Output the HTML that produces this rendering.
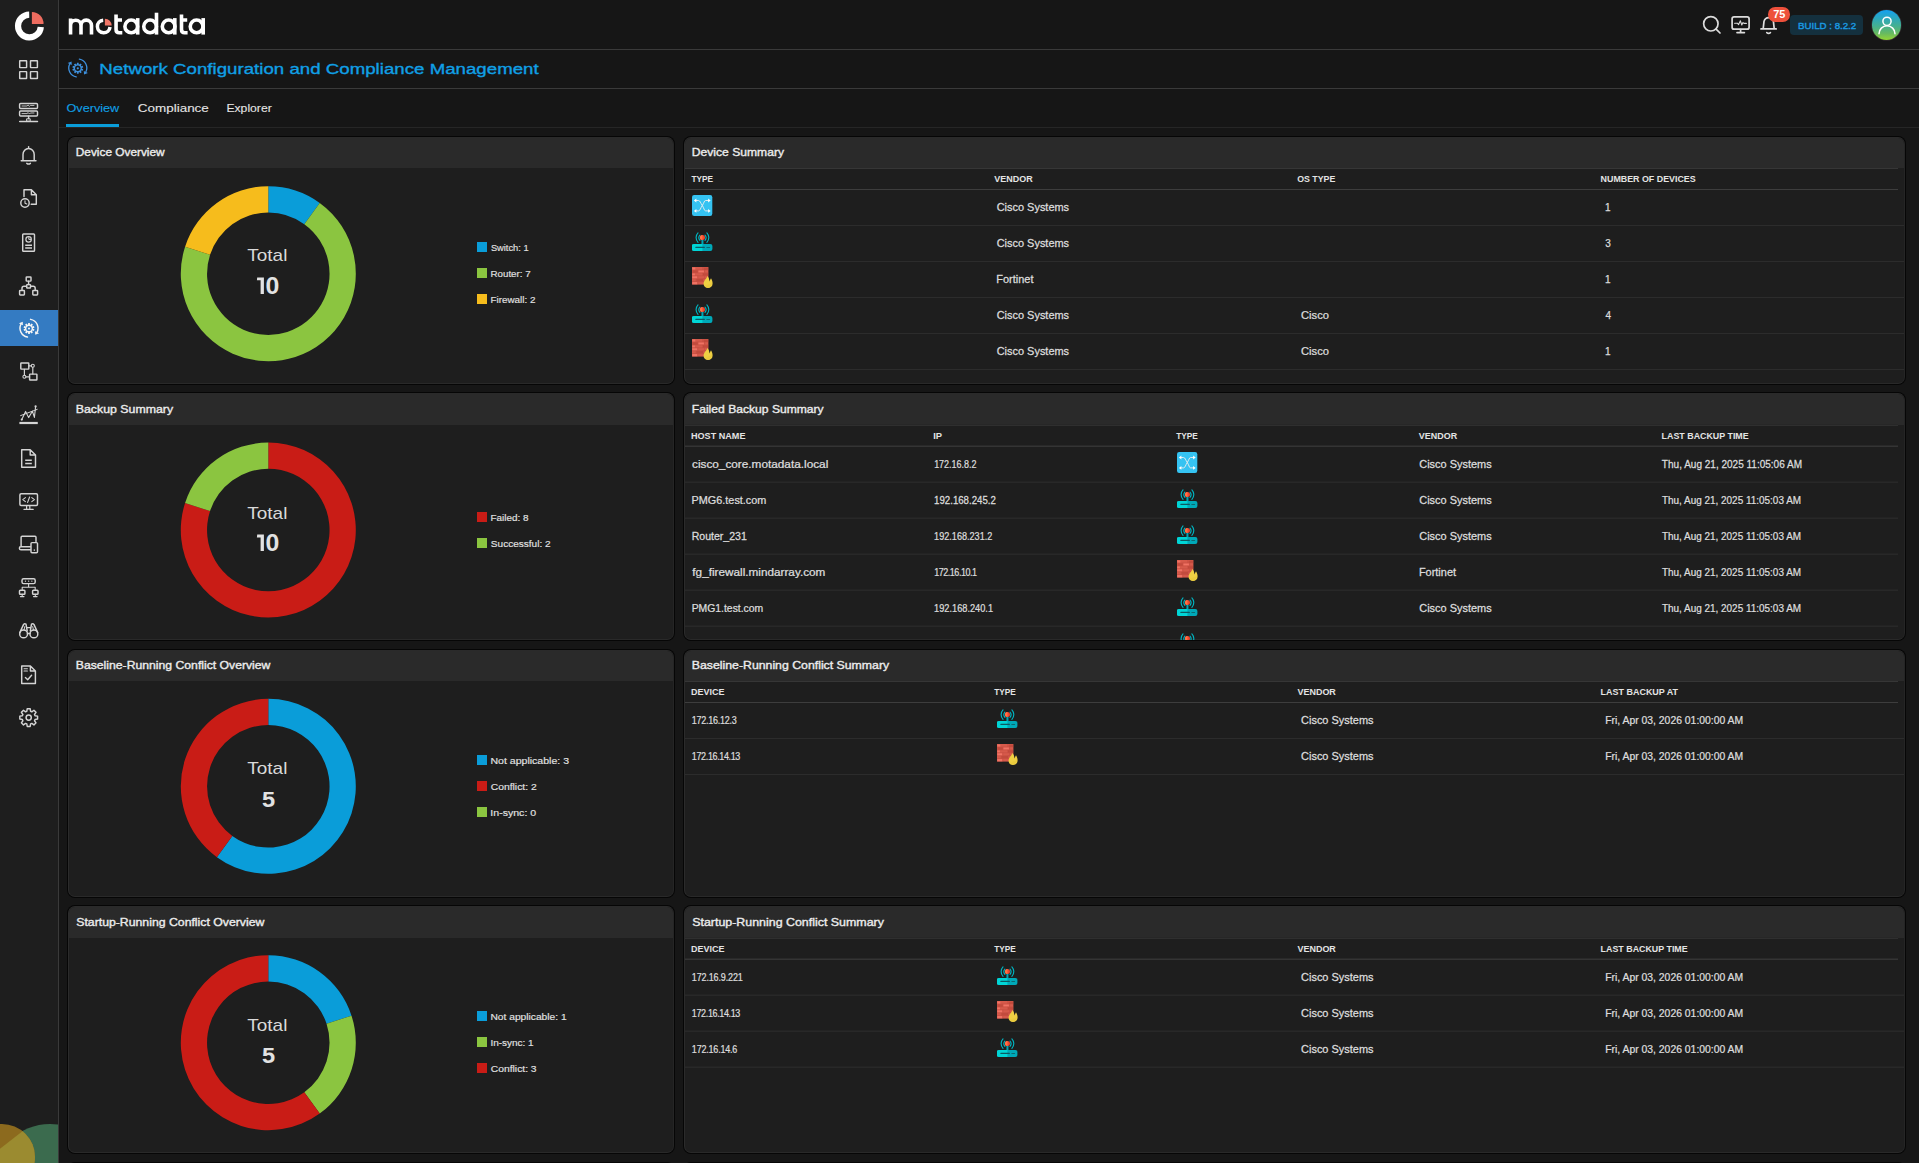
<!DOCTYPE html>
<html><head><meta charset="utf-8"><title>Network Configuration and Compliance Management</title>
<style>
html,body{margin:0;padding:0;background:#161616;}
html{overflow:hidden;width:1919px;height:1163px;}
body{width:1919px;height:1163px;overflow:hidden;position:relative;font-family:"Liberation Sans",sans-serif;}
.t{position:absolute;white-space:nowrap;line-height:1;}
.abs{position:absolute;}
.panel{position:absolute;box-sizing:border-box;background:#1e1e1e;border:1px solid;border-color:#2a2a2a #252525 #292929 #2b2b2b;border-radius:7px;box-shadow:0 0 0 1px #060606;overflow:hidden;}
.ph{position:absolute;left:0;top:0;right:0;height:30px;background:#2a2a2a;}
.hl{position:absolute;height:1px;}
svg{position:absolute;overflow:visible;}
#txt text{font-family:"Liberation Sans",sans-serif;white-space:pre;}
#root{position:relative;width:1919px;height:1163px;overflow:hidden;background:#161616;}
</style></head><body><div id="root">
<div class="abs" style="left:0;top:0;width:58px;height:1163px;background:#1e1e1e;overflow:hidden">
<svg style="left:0;top:1100px" width="58" height="63" viewBox="0 1100 58 63"><defs><clipPath id="cb"><circle cx="2" cy="1157" r="33"/></clipPath></defs><circle cx="50" cy="1181" r="57" fill="#3b6b4e"/><circle cx="2" cy="1157" r="33" fill="#8c6a1e"/><path d="M-2 1150.2L26 1128.6L60 1128V1170H-2Z" fill="#9b8b30" clip-path="url(#cb)"/></svg>
</div>
<div class="abs" style="left:58px;top:0;width:1px;height:1163px;background:#3a3a3a"></div>
<div class="abs" style="left:0;top:310px;width:58px;height:36px;background:#347bc2"></div>
<div class="abs" style="left:59px;top:49px;width:1860px;height:1px;background:#3a3a3a"></div>
<div class="abs" style="left:59px;top:88px;width:1860px;height:1px;background:#3a3a3a"></div>
<div class="abs" style="left:59px;top:127px;width:1860px;height:1px;background:#262626"></div>
<div class="abs" style="left:66px;top:124px;width:53px;height:3px;background:#0a9dd9"></div>
<svg style="left:0;top:0" width="59" height="50"><path d="M40.8 26.9A11.4 11.4 0 1 1 29.2 14.6" fill="none" stroke="#ffffff" stroke-width="6.2"/><path d="M31.9 23.9V12A11.6 11.6 0 0 1 43.5 23.9Z" fill="#ee6c5f"/></svg>
<svg style="left:0;top:0" width="260" height="50" fill="none" stroke="#ffffff" stroke-width="3.6"><path d="M70.55 34.5V18.4M70.55 25.4A5.22 5.22 0 0 1 81 25.4V34.5M81 25.4A5.25 5.25 0 0 1 91.5 25.4V34.5"/><path d="M110 27A6.3 6.3 0 1 1 103.2 20.2" stroke-width="3.5"/><path d="M104.9 25.5V18.7A6.8 6.8 0 0 1 111.7 25.5Z" fill="#f07667" stroke="none"/><path d="M116.05 14.6V29.6Q116.05 32.8 119.2 32.8H122.3M116 20H122" /><circle cx="131.25" cy="26.4" r="6.35"/><path d="M137.7 18.1V34.6"/><circle cx="150.1" cy="26.4" r="6.35"/><path d="M156.5 12.7V34.6"/><circle cx="168.65" cy="26.4" r="6.35"/><path d="M174.8 18.1V34.6"/><path d="M181.5 14.6V29.6Q181.5 32.8 184.6 32.8H187.6M181.4 20H187.2"/><circle cx="196.6" cy="26.4" r="6.35"/><path d="M203.2 18.1V34.6"/></svg>
<svg style="left:1690px;top:0" width="110" height="50" viewBox="1690 0 110 50" fill="none" stroke="#dcdcdc" stroke-width="1.7" stroke-linecap="round" stroke-linejoin="round"><circle cx="1710.85" cy="23.8" r="7.2"/><path d="M1716.1 29.1L1720 33"/><rect x="1732.1" y="16.9" width="17" height="12.3" rx="2"/><path d="M1740.6 29.6V32.2M1737 32.6H1744.4"/><path d="M1734.6 23.2H1737.4L1738.6 24.6L1740.4 20.8L1741.8 25L1743 22.6L1744 23.4H1746.4" stroke-width="1.1"/><path d="M1761 28.9H1776.2M1763.2 28.7L1764 21.4A4.9 5.4 0 0 1 1773.4 21.4L1774.2 28.7"/><path d="M1766.8 32.6Q1768.6 34.2 1770.4 32.6"/></svg>
<div class="abs" style="left:1768px;top:7px;width:22px;height:14.5px;border-radius:7.25px;background:#ee503b"></div>
<div class="abs" style="left:1790px;top:15px;width:73px;height:20px;border-radius:4px;background:#14303e"></div>
<div class="abs" style="left:1871.6px;top:9.9px;width:29.6px;height:29.8px;border-radius:50%;background:linear-gradient(180deg,#18a2ea 4%,#2ea8b8 30%,#46b08e 55%,#68ba60 78%,#8fd238 98%);box-shadow:0 0 0 0.6px #3a2f36"></div>
<svg style="left:1871.5px;top:9.8px" width="30" height="30" fill="none" stroke="#ffffff" stroke-width="1.5" stroke-linecap="round"><circle cx="15" cy="11.3" r="4.1"/><path d="M7 23.8A8 8 0 0 1 23 23.8"/></svg>
<svg style="left:0;top:0" width="59" height="760" fill="none" stroke="#d4d4d4" stroke-width="1.45" stroke-linejoin="round" stroke-linecap="round"><rect x="19.7" y="60.7" width="6.9" height="6.9" rx=".3"/><rect x="30.5" y="60.7" width="6.9" height="6.9" rx=".3"/><rect x="19.7" y="71.6" width="6.9" height="6.9" rx=".3"/><rect x="30.5" y="71.6" width="6.9" height="6.9" rx=".3"/><rect x="19.6" y="103.5" width="17.9" height="4.9" rx="1"/><rect x="19.6" y="111" width="17.9" height="5" rx="1"/><path d="M22 106H27l1.2-1 1.2 1.4 1-1H34M22 113.6H27l1.2-1 1.2 1.4 1-1H34" stroke-width=".9"/><path d="M28.6 116.2V118.6M19.7 121.4H37.5" /><rect x="27" y="118.8" width="3.2" height="2.4" stroke-width="1"/><path d="M28.6 146.6V148.2M21.2 160.8H36M23 160.6V154.4A5.6 6 0 0 1 34.2 154.4V160.6"/><path d="M26.8 163.4Q28.6 164.8 30.4 163.4" stroke-width="1.5"/><path d="M24 196.6V189.8H31.4L36.3 194.8V204.3H31.2M31.4 189.8V194.8H36.3"/><circle cx="25" cy="203" r="4.2"/><path d="M25 200.8V203.2L26.8 204" stroke-width="1.1"/><rect x="22.7" y="233.9" width="11.8" height="17.3" rx=".8"/><circle cx="28.6" cy="239.4" r="2.7" stroke-width="1.2"/><path d="M28.8 237.6V239.4H30.6" stroke-width="1"/><path d="M25.2 245.3H32M25.2 248.1H32" stroke-width="1.5" stroke-linecap="butt"/><rect x="26.2" y="276.9" width="4.8" height="4.2" rx=".6"/><rect x="26.7" y="284.6" width="3.8" height="3.4" rx=".5"/><rect x="19.6" y="290.5" width="4.8" height="4.4" rx=".6"/><rect x="32.8" y="290.5" width="4.8" height="4.4" rx=".6"/><path d="M28.6 281.3V284.4M26.5 286.3H24Q22 286.3 22 288.4V290.3M30.7 286.3H33.2Q35.2 286.3 35.2 288.4V290.3"/></svg>
<svg style="left:0;top:0" width="59" height="760"><path d="M30.56 319.34A9.0 9.0 0 0 1 36.95 332.43" fill="none" stroke="#f4f4f4" stroke-width="1.45" stroke-linecap="round"/><path d="M35.25 334.67L35.02 331.14L39.16 333.15Z" fill="#f4f4f4"/><path d="M27.44 337.06A9.0 9.0 0 0 1 21.05 323.97" fill="none" stroke="#f4f4f4" stroke-width="1.45" stroke-linecap="round"/><path d="M22.75 321.73L22.98 325.26L18.84 323.25Z" fill="#f4f4f4"/><path d="M28.04 324.62L28.14 323.07L29.86 323.07L29.96 324.62L30.50 324.79L31.50 323.60L32.89 324.61L32.06 325.93L32.39 326.38L33.90 326.00L34.43 327.64L32.99 328.22L32.99 328.78L34.43 329.36L33.90 331.00L32.39 330.62L32.06 331.07L32.89 332.39L31.50 333.40L30.50 332.21L29.96 332.38L29.86 333.93L28.14 333.93L28.04 332.38L27.50 332.21L26.50 333.40L25.11 332.39L25.94 331.07L25.61 330.62L24.10 331.00L23.57 329.36L25.01 328.78L25.01 328.22L23.57 327.64L24.10 326.00L25.61 326.38L25.94 325.93L25.11 324.61L26.50 323.60L27.50 324.79Z" fill="#f4f4f4"/><circle cx="29" cy="328.5" r="2.6" fill="#347bc2"/><circle cx="29" cy="328.5" r="1.05" fill="#f4f4f4"/></svg>
<svg style="left:0;top:0" width="59" height="760" fill="none" stroke="#d4d4d4" stroke-width="1.45" stroke-linejoin="round" stroke-linecap="round"><rect x="20.8" y="362.9" width="8" height="6.2" rx=".5"/><rect x="29.6" y="374.1" width="7.3" height="5.8" rx=".5"/><circle cx="32.8" cy="365.8" r="1.5" stroke-width="1.1"/><circle cx="24.4" cy="376.8" r="1.5" stroke-width="1.1"/><path d="M29 365.8H31.2M32.8 367.5V374M24.4 369.3V375.2M26 376.8H29.4" stroke-width="1.2"/><path d="M19.4 423H37.8" stroke-width="2.2" stroke-linecap="butt"/><path d="M21.8 419.6L25.6 411.4L28.6 417.6L32.4 411.2L34.4 417.4L35.6 406.6" stroke-width="1.1"/><path d="M20.6 415.6L37.2 409.4" stroke-width="1"/><circle cx="21.8" cy="419.6" r="1.1" fill="#d4d4d4" stroke="none"/><circle cx="35.6" cy="406.4" r="1.1" fill="#d4d4d4" stroke="none"/><path d="M21.7 449.7H30.2L35.5 455V467.3H21.7ZM30.2 449.7V455H35.5"/><path d="M25.2 460.2H31.8M25.2 463.5H31.8" stroke-width="1.5" stroke-linecap="butt"/><rect x="19.9" y="493.7" width="17.6" height="11.7" rx="1.2"/><path d="M26.6 506V508.6M29.8 506V508.6M24 509.4H33.2" stroke-width="1.2"/><path d="M25.4 497.6L22.8 499.6L25.4 501.6M31.8 497.6L34.4 499.6L31.8 501.6M29.6 497L27.6 502.4" stroke-width="1.1"/><path d="M21.1 546.4V537.2Q21.1 536.2 22.1 536.2H35Q36 536.2 36 537.2V541.6M30.4 546.8H20.6Q19.4 546.8 19.4 548.2Q19.4 549.8 21 549.8H30.4"/><rect x="31" y="542.6" width="6.5" height="10.2" rx="1"/><path d="M34.3 549.8V550.3" stroke-width="1.3"/><rect x="22" y="578.8" width="13.2" height="4.8" rx="1.6"/><path d="M25.4 581.2h.1M28.6 581.2h.1M31.8 581.2h.1" stroke-width="1.2"/><path d="M28.6 583.8V587.3M22.2 589.4V587.3H35.2V589.4" stroke-width="1.1"/><rect x="19.5" y="590.2" width="5.4" height="4" rx=".8"/><rect x="32.6" y="590.2" width="5.4" height="4" rx=".8"/><path d="M22.2 594.4V596.2M20.4 596.6H24M35.3 594.4V596.2M33.5 596.6H37.1" stroke-width="1.1"/><circle cx="23.6" cy="633.9" r="3.9"/><circle cx="33.9" cy="633.9" r="3.9"/><path d="M19.8 632.6L23.6 624.4Q24.6 623.2 26 624.2L27.2 631M37.7 632.6L33.9 624.4Q32.9 623.2 31.5 624.2L30.3 631M27.3 627.6H30.2M27.5 633.4H30" /><path d="M24 630L24.8 626.6M33.5 630L32.7 626.6" stroke-width="1"/><path d="M21.7 666H30.4L35.4 671V683.5H21.7ZM30.4 666V671H35.4"/><path d="M24 668.8H27.4M24 671H27.4" stroke-width="1.1"/><path d="M25.4 677.6L27.7 679.7L31.6 675.3" stroke-width="1.4"/></svg>
<svg style="left:0;top:0" width="59" height="760"><path d="M26.81 711.28L27.22 708.72L30.18 708.72L30.59 711.28L31.84 711.79L33.93 710.28L36.02 712.37L34.51 714.46L35.02 715.71L37.58 716.12L37.58 719.08L35.02 719.49L34.51 720.74L36.02 722.83L33.93 724.92L31.84 723.41L30.59 723.92L30.18 726.48L27.22 726.48L26.81 723.92L25.56 723.41L23.47 724.92L21.38 722.83L22.89 720.74L22.38 719.49L19.82 719.08L19.82 716.12L22.38 715.71L22.89 714.46L21.38 712.37L23.47 710.28L25.56 711.79Z" fill="none" stroke="#d4d4d4" stroke-width="1.45" stroke-linejoin="round"/><circle cx="28.7" cy="717.6" r="2.6" fill="none" stroke="#d4d4d4" stroke-width="1.5"/></svg>
<svg style="left:0;top:0" width="120" height="100"><path d="M79.36 59.14A9.0 9.0 0 0 1 85.75 72.23" fill="none" stroke="#3d8fdc" stroke-width="1.3" stroke-linecap="round"/><path d="M84.05 74.47L83.82 70.94L87.96 72.95Z" fill="#3d8fdc"/><path d="M76.24 76.86A9.0 9.0 0 0 1 69.85 63.77" fill="none" stroke="#3d8fdc" stroke-width="1.3" stroke-linecap="round"/><path d="M71.55 61.53L71.78 65.06L67.64 63.05Z" fill="#3d8fdc"/><path d="M76.84 64.42L76.94 62.87L78.66 62.87L78.76 64.42L79.30 64.59L80.30 63.40L81.69 64.41L80.86 65.73L81.19 66.18L82.70 65.80L83.23 67.44L81.79 68.02L81.79 68.58L83.23 69.16L82.70 70.80L81.19 70.42L80.86 70.87L81.69 72.19L80.30 73.20L79.30 72.01L78.76 72.18L78.66 73.73L76.94 73.73L76.84 72.18L76.30 72.01L75.30 73.20L73.91 72.19L74.74 70.87L74.41 70.42L72.90 70.80L72.37 69.16L73.81 68.58L73.81 68.02L72.37 67.44L72.90 65.80L74.41 66.18L74.74 65.73L73.91 64.41L75.30 63.40L76.30 64.59Z" fill="#3d8fdc"/><circle cx="77.8" cy="68.3" r="2.7" fill="#161616"/><circle cx="77.8" cy="68.3" r="1.1" fill="#3d8fdc"/></svg>
<div class="panel" style="left:68px;top:137px;width:606px;height:247px"><div class="ph" style="height:30px"></div></div>
<svg style="left:0;top:0" width="1919" height="1163"><path d="M268.30 186.20A87.5 87.5 0 0 1 319.73 202.91L304.30 224.15A61.25 61.25 0 0 0 268.30 212.45Z" fill="#0a9dd9"/><path d="M319.73 202.91A87.5 87.5 0 1 1 185.08 246.66L210.05 254.77A61.25 61.25 0 1 0 304.30 224.15Z" fill="#8bc540"/><path d="M185.08 246.66A87.5 87.5 0 0 1 268.30 186.20L268.30 212.45A61.25 61.25 0 0 0 210.05 254.77Z" fill="#f6bc1c"/></svg>
<div class="abs" style="left:477px;top:242.00px;width:10px;height:10px;background:#0a9dd9"></div>
<div class="abs" style="left:477px;top:268.00px;width:10px;height:10px;background:#8bc540"></div>
<div class="abs" style="left:477px;top:294.00px;width:10px;height:10px;background:#f6bc1c"></div>
<div class="panel" style="left:68px;top:393.33px;width:606px;height:247px"><div class="ph" style="height:31px"></div></div>
<svg style="left:0;top:0" width="1919" height="1163"><path d="M268.30 442.53A87.5 87.5 0 1 1 185.08 502.99L210.05 511.10A61.25 61.25 0 1 0 268.30 468.78Z" fill="#c91c16"/><path d="M185.08 502.99A87.5 87.5 0 0 1 268.30 442.53L268.30 468.78A61.25 61.25 0 0 0 210.05 511.10Z" fill="#8bc540"/></svg>
<div class="abs" style="left:477px;top:512.33px;width:10px;height:10px;background:#c91c16"></div>
<div class="abs" style="left:477px;top:538.33px;width:10px;height:10px;background:#8bc540"></div>
<div class="panel" style="left:68px;top:649.67px;width:606px;height:247px"><div class="ph" style="height:30px"></div></div>
<svg style="left:0;top:0" width="1919" height="1163"><path d="M268.30 698.87A87.5 87.5 0 1 1 216.87 857.16L232.30 835.92A61.25 61.25 0 1 0 268.30 725.12Z" fill="#0a9dd9"/><path d="M216.87 857.16A87.5 87.5 0 0 1 268.30 698.87L268.30 725.12A61.25 61.25 0 0 0 232.30 835.92Z" fill="#c91c16"/></svg>
<div class="abs" style="left:477px;top:755.17px;width:10px;height:10px;background:#0a9dd9"></div>
<div class="abs" style="left:477px;top:781.17px;width:10px;height:10px;background:#c91c16"></div>
<div class="abs" style="left:477px;top:807.17px;width:10px;height:10px;background:#8bc540"></div>
<div class="panel" style="left:68px;top:906px;width:606px;height:247px"><div class="ph" style="height:31px"></div></div>
<svg style="left:0;top:0" width="1919" height="1163"><path d="M268.30 955.20A87.5 87.5 0 0 1 351.52 1015.66L326.55 1023.77A61.25 61.25 0 0 0 268.30 981.45Z" fill="#0a9dd9"/><path d="M351.52 1015.66A87.5 87.5 0 0 1 319.73 1113.49L304.30 1092.25A61.25 61.25 0 0 0 326.55 1023.77Z" fill="#8bc540"/><path d="M319.73 1113.49A87.5 87.5 0 1 1 268.30 955.20L268.30 981.45A61.25 61.25 0 1 0 304.30 1092.25Z" fill="#c91c16"/></svg>
<div class="abs" style="left:477px;top:1010.90px;width:10px;height:10px;background:#0a9dd9"></div>
<div class="abs" style="left:477px;top:1036.90px;width:10px;height:10px;background:#8bc540"></div>
<div class="abs" style="left:477px;top:1062.90px;width:10px;height:10px;background:#c91c16"></div>
<div class="panel" style="left:68px;top:1163px;width:606px;height:247px"><div class="ph"></div></div>
<div class="panel" style="left:684px;top:1163px;width:1221px;height:247px"><div class="ph"></div></div>
<div class="panel" style="left:684px;top:137px;width:1221px;height:247px"><div class="ph" style="height:30px"></div>
<div class="hl" style="left:0;top:30px;width:1213px;background:#363636"></div>
<div class="hl" style="left:0;top:51px;width:1213px;background:#3d3d3d"></div>
<div class="hl" style="left:0;top:87px;width:1220px;background:#2c2c2c"></div>
<div class="hl" style="left:0;top:123px;width:1220px;background:#2c2c2c"></div>
<div class="hl" style="left:0;top:159px;width:1220px;background:#2c2c2c"></div>
<div class="hl" style="left:0;top:195px;width:1220px;background:#2c2c2c"></div>
<div class="hl" style="left:0;top:231px;width:1220px;background:#2c2c2c"></div>
</div>
<svg style="left:692.00px;top:195.00px;overflow:hidden" width="21" height="21.00" viewBox="0 0 21 21.00"> <rect x="0" y="0" width="20.3" height="21" rx="2.2" fill="#35c3f2"/><g fill="none" stroke="#f0eeee" stroke-width="0.9" stroke-linecap="round" stroke-linejoin="round"><path d="M3.6 5.5H6.6C8 5.5 8.6 8 10.3 10.5S12.2 15.9 13.6 15.9H16.6"/><path d="M3.6 15.9H6.6C8 15.9 8.6 13 10.3 10.5S12.2 5.5 13.6 5.5H16.6"/></g><g fill="#ffffff"><path d="M1.9 5.5L4.4 3.6V7.4Z"/><path d="M1.9 15.9L4.4 14V17.8Z"/><path d="M18.6 5.5L16.1 3.6V7.4Z"/><path d="M18.6 15.9L16.1 14V17.8Z"/></g></svg>
<svg style="left:692.00px;top:231.00px;overflow:hidden" width="21" height="21.00" viewBox="0 0 21 21.00"> <g fill="none" stroke="#00b3bf" stroke-width="1.15" stroke-linecap="round"><path d="M7.9 4.1A4 4 0 0 0 7.9 9.3"/><path d="M13 4.1A4 4 0 0 1 13 9.3"/><path d="M6 1.8A7 7 0 0 0 6 11.4"/><path d="M14.9 1.8A7 7 0 0 1 14.9 11.4"/></g><rect x="9.45" y="8.5" width="2" height="5" fill="#00a5b4"/><rect x="-0.3" y="13" width="10.8" height="7" rx="2" fill="#00d5d6"/><rect x="8" y="13" width="12.4" height="7" rx="2" fill="#00a9b8"/><rect x="5" y="13" width="5.4" height="7" fill="#00d5d6"/><rect x="3.3" y="15.8" width="9.6" height="1.3" rx=".5" fill="#0b5a62"/><rect x="14.3" y="15.9" width="3.8" height="1.1" rx=".5" fill="#0b6a72"/><circle cx="10.45" cy="6.4" r="2.5" fill="#f4452e"/><path d="M10.45 3.9A2.5 2.5 0 0 0 10.45 8.9Z" fill="#ff7446"/></svg>
<svg style="left:692.00px;top:267.00px;overflow:hidden" width="21" height="21.00" viewBox="0 0 21 21.00"> <rect x="0" y="0" width="16.4" height="17.6" fill="#d65a4b"/><g fill="#f07364"><rect x="0.3" y="0.5" width="3" height="2.3"/><rect x="6.3" y="3.4" width="5.6" height="2.2"/><rect x="0.3" y="9.2" width="5" height="2.3"/><rect x="0.3" y="15" width="5" height="2.3"/><rect x="0.3" y="6.3" width="2.6" height="2.2"/></g><g fill="#c24b3d"><rect x="0.3" y="3.4" width="5.3" height="2.2"/><rect x="11" y="6.3" width="5" height="2.2"/><rect x="4.5" y="12.1" width="6.5" height="2.2"/><rect x="11.6" y="0.5" width="4.5" height="2.3"/></g><g stroke="#b84438" stroke-width=".45" opacity=".7"><path d="M0 2.95H16.4M0 5.85H16.4M0 8.75H16.4M0 11.65H16.4M0 14.55H16.4"/><path d="M10.7 0V2.9M5.9 2.9V5.8M12.6 2.9V5.8M10.7 5.8V8.7M5.7 8.7V11.6M12.5 8.7V11.6M4.1 11.6V14.5M11.3 11.6V14.5M5.7 14.5V17.6"/></g><path d="M15.6 8.9C16.6 10.8 17.4 12 17.5 14.6C18 13.4 18.4 12.4 19 11.3C20 13 20.6 14.6 20.6 16.4C20.6 19.2 18.6 21 16 21C13.4 21 11.6 19.4 11.6 16.8C11.6 13.6 14.4 11.8 15.6 8.9Z" fill="#efd043"/><path d="M16.6 17C17.6 17.4 19.2 17 20 15.4C20.2 18.6 18.4 20.4 16 20.4C14.4 20.4 13 19.6 12.4 18.4C13.6 18.8 15.4 18.4 16.6 17Z" fill="#e9c93c" opacity=".8"/></svg>
<svg style="left:692.00px;top:303.00px;overflow:hidden" width="21" height="21.00" viewBox="0 0 21 21.00"> <g fill="none" stroke="#00b3bf" stroke-width="1.15" stroke-linecap="round"><path d="M7.9 4.1A4 4 0 0 0 7.9 9.3"/><path d="M13 4.1A4 4 0 0 1 13 9.3"/><path d="M6 1.8A7 7 0 0 0 6 11.4"/><path d="M14.9 1.8A7 7 0 0 1 14.9 11.4"/></g><rect x="9.45" y="8.5" width="2" height="5" fill="#00a5b4"/><rect x="-0.3" y="13" width="10.8" height="7" rx="2" fill="#00d5d6"/><rect x="8" y="13" width="12.4" height="7" rx="2" fill="#00a9b8"/><rect x="5" y="13" width="5.4" height="7" fill="#00d5d6"/><rect x="3.3" y="15.8" width="9.6" height="1.3" rx=".5" fill="#0b5a62"/><rect x="14.3" y="15.9" width="3.8" height="1.1" rx=".5" fill="#0b6a72"/><circle cx="10.45" cy="6.4" r="2.5" fill="#f4452e"/><path d="M10.45 3.9A2.5 2.5 0 0 0 10.45 8.9Z" fill="#ff7446"/></svg>
<svg style="left:692.00px;top:339.00px;overflow:hidden" width="21" height="21.00" viewBox="0 0 21 21.00"> <rect x="0" y="0" width="16.4" height="17.6" fill="#d65a4b"/><g fill="#f07364"><rect x="0.3" y="0.5" width="3" height="2.3"/><rect x="6.3" y="3.4" width="5.6" height="2.2"/><rect x="0.3" y="9.2" width="5" height="2.3"/><rect x="0.3" y="15" width="5" height="2.3"/><rect x="0.3" y="6.3" width="2.6" height="2.2"/></g><g fill="#c24b3d"><rect x="0.3" y="3.4" width="5.3" height="2.2"/><rect x="11" y="6.3" width="5" height="2.2"/><rect x="4.5" y="12.1" width="6.5" height="2.2"/><rect x="11.6" y="0.5" width="4.5" height="2.3"/></g><g stroke="#b84438" stroke-width=".45" opacity=".7"><path d="M0 2.95H16.4M0 5.85H16.4M0 8.75H16.4M0 11.65H16.4M0 14.55H16.4"/><path d="M10.7 0V2.9M5.9 2.9V5.8M12.6 2.9V5.8M10.7 5.8V8.7M5.7 8.7V11.6M12.5 8.7V11.6M4.1 11.6V14.5M11.3 11.6V14.5M5.7 14.5V17.6"/></g><path d="M15.6 8.9C16.6 10.8 17.4 12 17.5 14.6C18 13.4 18.4 12.4 19 11.3C20 13 20.6 14.6 20.6 16.4C20.6 19.2 18.6 21 16 21C13.4 21 11.6 19.4 11.6 16.8C11.6 13.6 14.4 11.8 15.6 8.9Z" fill="#efd043"/><path d="M16.6 17C17.6 17.4 19.2 17 20 15.4C20.2 18.6 18.4 20.4 16 20.4C14.4 20.4 13 19.6 12.4 18.4C13.6 18.8 15.4 18.4 16.6 17Z" fill="#e9c93c" opacity=".8"/></svg>
<div class="panel" style="left:684px;top:393.33px;width:1221px;height:247px"><div class="ph" style="height:31px"></div>
<div class="hl" style="left:0;top:30px;width:1213px;background:#272727"></div>
<div class="hl" style="left:0;top:31px;width:1213px;background:#2f2f2f"></div>
<div class="hl" style="left:0;top:51px;width:1213px;background:#292929"></div>
<div class="hl" style="left:0;top:52px;width:1213px;background:#343434"></div>
<div class="hl" style="left:0;top:87px;width:1213px;background:#232323"></div>
<div class="hl" style="left:0;top:88px;width:1213px;background:#282828"></div>
<div class="hl" style="left:0;top:123px;width:1213px;background:#232323"></div>
<div class="hl" style="left:0;top:124px;width:1213px;background:#282828"></div>
<div class="hl" style="left:0;top:159px;width:1213px;background:#232323"></div>
<div class="hl" style="left:0;top:160px;width:1213px;background:#282828"></div>
<div class="hl" style="left:0;top:195px;width:1213px;background:#232323"></div>
<div class="hl" style="left:0;top:196px;width:1213px;background:#282828"></div>
<div class="hl" style="left:0;top:231px;width:1213px;background:#232323"></div>
<div class="hl" style="left:0;top:232px;width:1213px;background:#282828"></div>
<div class="hl" style="left:0;top:267px;width:1213px;background:#232323"></div>
<div class="hl" style="left:0;top:268px;width:1213px;background:#282828"></div>
</div>
<svg style="left:1176.70px;top:452.08px;overflow:hidden" width="21" height="21.00" viewBox="0 0 21 21.00"> <rect x="0" y="0" width="20.3" height="21" rx="2.2" fill="#35c3f2"/><g fill="none" stroke="#f0eeee" stroke-width="0.9" stroke-linecap="round" stroke-linejoin="round"><path d="M3.6 5.5H6.6C8 5.5 8.6 8 10.3 10.5S12.2 15.9 13.6 15.9H16.6"/><path d="M3.6 15.9H6.6C8 15.9 8.6 13 10.3 10.5S12.2 5.5 13.6 5.5H16.6"/></g><g fill="#ffffff"><path d="M1.9 5.5L4.4 3.6V7.4Z"/><path d="M1.9 15.9L4.4 14V17.8Z"/><path d="M18.6 5.5L16.1 3.6V7.4Z"/><path d="M18.6 15.9L16.1 14V17.8Z"/></g></svg>
<svg style="left:1176.70px;top:488.08px;overflow:hidden" width="21" height="21.00" viewBox="0 0 21 21.00"> <g fill="none" stroke="#00b3bf" stroke-width="1.15" stroke-linecap="round"><path d="M7.9 4.1A4 4 0 0 0 7.9 9.3"/><path d="M13 4.1A4 4 0 0 1 13 9.3"/><path d="M6 1.8A7 7 0 0 0 6 11.4"/><path d="M14.9 1.8A7 7 0 0 1 14.9 11.4"/></g><rect x="9.45" y="8.5" width="2" height="5" fill="#00a5b4"/><rect x="-0.3" y="13" width="10.8" height="7" rx="2" fill="#00d5d6"/><rect x="8" y="13" width="12.4" height="7" rx="2" fill="#00a9b8"/><rect x="5" y="13" width="5.4" height="7" fill="#00d5d6"/><rect x="3.3" y="15.8" width="9.6" height="1.3" rx=".5" fill="#0b5a62"/><rect x="14.3" y="15.9" width="3.8" height="1.1" rx=".5" fill="#0b6a72"/><circle cx="10.45" cy="6.4" r="2.5" fill="#f4452e"/><path d="M10.45 3.9A2.5 2.5 0 0 0 10.45 8.9Z" fill="#ff7446"/></svg>
<svg style="left:1176.70px;top:524.08px;overflow:hidden" width="21" height="21.00" viewBox="0 0 21 21.00"> <g fill="none" stroke="#00b3bf" stroke-width="1.15" stroke-linecap="round"><path d="M7.9 4.1A4 4 0 0 0 7.9 9.3"/><path d="M13 4.1A4 4 0 0 1 13 9.3"/><path d="M6 1.8A7 7 0 0 0 6 11.4"/><path d="M14.9 1.8A7 7 0 0 1 14.9 11.4"/></g><rect x="9.45" y="8.5" width="2" height="5" fill="#00a5b4"/><rect x="-0.3" y="13" width="10.8" height="7" rx="2" fill="#00d5d6"/><rect x="8" y="13" width="12.4" height="7" rx="2" fill="#00a9b8"/><rect x="5" y="13" width="5.4" height="7" fill="#00d5d6"/><rect x="3.3" y="15.8" width="9.6" height="1.3" rx=".5" fill="#0b5a62"/><rect x="14.3" y="15.9" width="3.8" height="1.1" rx=".5" fill="#0b6a72"/><circle cx="10.45" cy="6.4" r="2.5" fill="#f4452e"/><path d="M10.45 3.9A2.5 2.5 0 0 0 10.45 8.9Z" fill="#ff7446"/></svg>
<svg style="left:1176.70px;top:560.08px;overflow:hidden" width="21" height="21.00" viewBox="0 0 21 21.00"> <rect x="0" y="0" width="16.4" height="17.6" fill="#d65a4b"/><g fill="#f07364"><rect x="0.3" y="0.5" width="3" height="2.3"/><rect x="6.3" y="3.4" width="5.6" height="2.2"/><rect x="0.3" y="9.2" width="5" height="2.3"/><rect x="0.3" y="15" width="5" height="2.3"/><rect x="0.3" y="6.3" width="2.6" height="2.2"/></g><g fill="#c24b3d"><rect x="0.3" y="3.4" width="5.3" height="2.2"/><rect x="11" y="6.3" width="5" height="2.2"/><rect x="4.5" y="12.1" width="6.5" height="2.2"/><rect x="11.6" y="0.5" width="4.5" height="2.3"/></g><g stroke="#b84438" stroke-width=".45" opacity=".7"><path d="M0 2.95H16.4M0 5.85H16.4M0 8.75H16.4M0 11.65H16.4M0 14.55H16.4"/><path d="M10.7 0V2.9M5.9 2.9V5.8M12.6 2.9V5.8M10.7 5.8V8.7M5.7 8.7V11.6M12.5 8.7V11.6M4.1 11.6V14.5M11.3 11.6V14.5M5.7 14.5V17.6"/></g><path d="M15.6 8.9C16.6 10.8 17.4 12 17.5 14.6C18 13.4 18.4 12.4 19 11.3C20 13 20.6 14.6 20.6 16.4C20.6 19.2 18.6 21 16 21C13.4 21 11.6 19.4 11.6 16.8C11.6 13.6 14.4 11.8 15.6 8.9Z" fill="#efd043"/><path d="M16.6 17C17.6 17.4 19.2 17 20 15.4C20.2 18.6 18.4 20.4 16 20.4C14.4 20.4 13 19.6 12.4 18.4C13.6 18.8 15.4 18.4 16.6 17Z" fill="#e9c93c" opacity=".8"/></svg>
<svg style="left:1176.70px;top:596.08px;overflow:hidden" width="21" height="21.00" viewBox="0 0 21 21.00"> <g fill="none" stroke="#00b3bf" stroke-width="1.15" stroke-linecap="round"><path d="M7.9 4.1A4 4 0 0 0 7.9 9.3"/><path d="M13 4.1A4 4 0 0 1 13 9.3"/><path d="M6 1.8A7 7 0 0 0 6 11.4"/><path d="M14.9 1.8A7 7 0 0 1 14.9 11.4"/></g><rect x="9.45" y="8.5" width="2" height="5" fill="#00a5b4"/><rect x="-0.3" y="13" width="10.8" height="7" rx="2" fill="#00d5d6"/><rect x="8" y="13" width="12.4" height="7" rx="2" fill="#00a9b8"/><rect x="5" y="13" width="5.4" height="7" fill="#00d5d6"/><rect x="3.3" y="15.8" width="9.6" height="1.3" rx=".5" fill="#0b5a62"/><rect x="14.3" y="15.9" width="3.8" height="1.1" rx=".5" fill="#0b6a72"/><circle cx="10.45" cy="6.4" r="2.5" fill="#f4452e"/><path d="M10.45 3.9A2.5 2.5 0 0 0 10.45 8.9Z" fill="#ff7446"/></svg>
<svg style="left:1176.70px;top:632.08px;overflow:hidden" width="21" height="8.00" viewBox="0 0 21 8.00"> <g fill="none" stroke="#00b3bf" stroke-width="1.15" stroke-linecap="round"><path d="M7.9 4.1A4 4 0 0 0 7.9 9.3"/><path d="M13 4.1A4 4 0 0 1 13 9.3"/><path d="M6 1.8A7 7 0 0 0 6 11.4"/><path d="M14.9 1.8A7 7 0 0 1 14.9 11.4"/></g><rect x="9.45" y="8.5" width="2" height="5" fill="#00a5b4"/><rect x="-0.3" y="13" width="10.8" height="7" rx="2" fill="#00d5d6"/><rect x="8" y="13" width="12.4" height="7" rx="2" fill="#00a9b8"/><rect x="5" y="13" width="5.4" height="7" fill="#00d5d6"/><rect x="3.3" y="15.8" width="9.6" height="1.3" rx=".5" fill="#0b5a62"/><rect x="14.3" y="15.9" width="3.8" height="1.1" rx=".5" fill="#0b6a72"/><circle cx="10.45" cy="6.4" r="2.5" fill="#f4452e"/><path d="M10.45 3.9A2.5 2.5 0 0 0 10.45 8.9Z" fill="#ff7446"/></svg>
<div class="panel" style="left:684px;top:649.67px;width:1221px;height:247px"><div class="ph" style="height:30px"></div>
<div class="hl" style="left:0;top:30px;width:1213px;background:#363636"></div>
<div class="hl" style="left:0;top:51px;width:1213px;background:#3d3d3d"></div>
<div class="hl" style="left:0;top:87px;width:1220px;background:#2c2c2c"></div>
<div class="hl" style="left:0;top:123px;width:1220px;background:#2c2c2c"></div>
</div>
<svg style="left:996.80px;top:707.67px;overflow:hidden" width="21" height="21.00" viewBox="0 0 21 21.00"> <g fill="none" stroke="#00b3bf" stroke-width="1.15" stroke-linecap="round"><path d="M7.9 4.1A4 4 0 0 0 7.9 9.3"/><path d="M13 4.1A4 4 0 0 1 13 9.3"/><path d="M6 1.8A7 7 0 0 0 6 11.4"/><path d="M14.9 1.8A7 7 0 0 1 14.9 11.4"/></g><rect x="9.45" y="8.5" width="2" height="5" fill="#00a5b4"/><rect x="-0.3" y="13" width="10.8" height="7" rx="2" fill="#00d5d6"/><rect x="8" y="13" width="12.4" height="7" rx="2" fill="#00a9b8"/><rect x="5" y="13" width="5.4" height="7" fill="#00d5d6"/><rect x="3.3" y="15.8" width="9.6" height="1.3" rx=".5" fill="#0b5a62"/><rect x="14.3" y="15.9" width="3.8" height="1.1" rx=".5" fill="#0b6a72"/><circle cx="10.45" cy="6.4" r="2.5" fill="#f4452e"/><path d="M10.45 3.9A2.5 2.5 0 0 0 10.45 8.9Z" fill="#ff7446"/></svg>
<svg style="left:996.80px;top:743.67px;overflow:hidden" width="21" height="21.00" viewBox="0 0 21 21.00"> <rect x="0" y="0" width="16.4" height="17.6" fill="#d65a4b"/><g fill="#f07364"><rect x="0.3" y="0.5" width="3" height="2.3"/><rect x="6.3" y="3.4" width="5.6" height="2.2"/><rect x="0.3" y="9.2" width="5" height="2.3"/><rect x="0.3" y="15" width="5" height="2.3"/><rect x="0.3" y="6.3" width="2.6" height="2.2"/></g><g fill="#c24b3d"><rect x="0.3" y="3.4" width="5.3" height="2.2"/><rect x="11" y="6.3" width="5" height="2.2"/><rect x="4.5" y="12.1" width="6.5" height="2.2"/><rect x="11.6" y="0.5" width="4.5" height="2.3"/></g><g stroke="#b84438" stroke-width=".45" opacity=".7"><path d="M0 2.95H16.4M0 5.85H16.4M0 8.75H16.4M0 11.65H16.4M0 14.55H16.4"/><path d="M10.7 0V2.9M5.9 2.9V5.8M12.6 2.9V5.8M10.7 5.8V8.7M5.7 8.7V11.6M12.5 8.7V11.6M4.1 11.6V14.5M11.3 11.6V14.5M5.7 14.5V17.6"/></g><path d="M15.6 8.9C16.6 10.8 17.4 12 17.5 14.6C18 13.4 18.4 12.4 19 11.3C20 13 20.6 14.6 20.6 16.4C20.6 19.2 18.6 21 16 21C13.4 21 11.6 19.4 11.6 16.8C11.6 13.6 14.4 11.8 15.6 8.9Z" fill="#efd043"/><path d="M16.6 17C17.6 17.4 19.2 17 20 15.4C20.2 18.6 18.4 20.4 16 20.4C14.4 20.4 13 19.6 12.4 18.4C13.6 18.8 15.4 18.4 16.6 17Z" fill="#e9c93c" opacity=".8"/></svg>
<div class="panel" style="left:684px;top:906px;width:1221px;height:247px"><div class="ph" style="height:31px"></div>
<div class="hl" style="left:0;top:30px;width:1213px;background:#272727"></div>
<div class="hl" style="left:0;top:31px;width:1213px;background:#2f2f2f"></div>
<div class="hl" style="left:0;top:51px;width:1213px;background:#292929"></div>
<div class="hl" style="left:0;top:52px;width:1213px;background:#343434"></div>
<div class="hl" style="left:0;top:87px;width:1220px;background:#232323"></div>
<div class="hl" style="left:0;top:88px;width:1220px;background:#282828"></div>
<div class="hl" style="left:0;top:123px;width:1220px;background:#232323"></div>
<div class="hl" style="left:0;top:124px;width:1220px;background:#282828"></div>
<div class="hl" style="left:0;top:159px;width:1220px;background:#232323"></div>
<div class="hl" style="left:0;top:160px;width:1220px;background:#282828"></div>
</div>
<svg style="left:996.80px;top:964.75px;overflow:hidden" width="21" height="21.00" viewBox="0 0 21 21.00"> <g fill="none" stroke="#00b3bf" stroke-width="1.15" stroke-linecap="round"><path d="M7.9 4.1A4 4 0 0 0 7.9 9.3"/><path d="M13 4.1A4 4 0 0 1 13 9.3"/><path d="M6 1.8A7 7 0 0 0 6 11.4"/><path d="M14.9 1.8A7 7 0 0 1 14.9 11.4"/></g><rect x="9.45" y="8.5" width="2" height="5" fill="#00a5b4"/><rect x="-0.3" y="13" width="10.8" height="7" rx="2" fill="#00d5d6"/><rect x="8" y="13" width="12.4" height="7" rx="2" fill="#00a9b8"/><rect x="5" y="13" width="5.4" height="7" fill="#00d5d6"/><rect x="3.3" y="15.8" width="9.6" height="1.3" rx=".5" fill="#0b5a62"/><rect x="14.3" y="15.9" width="3.8" height="1.1" rx=".5" fill="#0b6a72"/><circle cx="10.45" cy="6.4" r="2.5" fill="#f4452e"/><path d="M10.45 3.9A2.5 2.5 0 0 0 10.45 8.9Z" fill="#ff7446"/></svg>
<svg style="left:996.80px;top:1000.75px;overflow:hidden" width="21" height="21.00" viewBox="0 0 21 21.00"> <rect x="0" y="0" width="16.4" height="17.6" fill="#d65a4b"/><g fill="#f07364"><rect x="0.3" y="0.5" width="3" height="2.3"/><rect x="6.3" y="3.4" width="5.6" height="2.2"/><rect x="0.3" y="9.2" width="5" height="2.3"/><rect x="0.3" y="15" width="5" height="2.3"/><rect x="0.3" y="6.3" width="2.6" height="2.2"/></g><g fill="#c24b3d"><rect x="0.3" y="3.4" width="5.3" height="2.2"/><rect x="11" y="6.3" width="5" height="2.2"/><rect x="4.5" y="12.1" width="6.5" height="2.2"/><rect x="11.6" y="0.5" width="4.5" height="2.3"/></g><g stroke="#b84438" stroke-width=".45" opacity=".7"><path d="M0 2.95H16.4M0 5.85H16.4M0 8.75H16.4M0 11.65H16.4M0 14.55H16.4"/><path d="M10.7 0V2.9M5.9 2.9V5.8M12.6 2.9V5.8M10.7 5.8V8.7M5.7 8.7V11.6M12.5 8.7V11.6M4.1 11.6V14.5M11.3 11.6V14.5M5.7 14.5V17.6"/></g><path d="M15.6 8.9C16.6 10.8 17.4 12 17.5 14.6C18 13.4 18.4 12.4 19 11.3C20 13 20.6 14.6 20.6 16.4C20.6 19.2 18.6 21 16 21C13.4 21 11.6 19.4 11.6 16.8C11.6 13.6 14.4 11.8 15.6 8.9Z" fill="#efd043"/><path d="M16.6 17C17.6 17.4 19.2 17 20 15.4C20.2 18.6 18.4 20.4 16 20.4C14.4 20.4 13 19.6 12.4 18.4C13.6 18.8 15.4 18.4 16.6 17Z" fill="#e9c93c" opacity=".8"/></svg>
<svg style="left:996.80px;top:1036.75px;overflow:hidden" width="21" height="21.00" viewBox="0 0 21 21.00"> <g fill="none" stroke="#00b3bf" stroke-width="1.15" stroke-linecap="round"><path d="M7.9 4.1A4 4 0 0 0 7.9 9.3"/><path d="M13 4.1A4 4 0 0 1 13 9.3"/><path d="M6 1.8A7 7 0 0 0 6 11.4"/><path d="M14.9 1.8A7 7 0 0 1 14.9 11.4"/></g><rect x="9.45" y="8.5" width="2" height="5" fill="#00a5b4"/><rect x="-0.3" y="13" width="10.8" height="7" rx="2" fill="#00d5d6"/><rect x="8" y="13" width="12.4" height="7" rx="2" fill="#00a9b8"/><rect x="5" y="13" width="5.4" height="7" fill="#00d5d6"/><rect x="3.3" y="15.8" width="9.6" height="1.3" rx=".5" fill="#0b5a62"/><rect x="14.3" y="15.9" width="3.8" height="1.1" rx=".5" fill="#0b6a72"/><circle cx="10.45" cy="6.4" r="2.5" fill="#f4452e"/><path d="M10.45 3.9A2.5 2.5 0 0 0 10.45 8.9Z" fill="#ff7446"/></svg>
<svg id="txt" style="left:0;top:0" width="1919" height="1163"><text transform="translate(1773.24 18.20) scale(1.0515 1)" font-size="10.4" fill="#ffffff" font-weight="700">75</text><text transform="translate(1798.10 29.10) scale(1.0199 1)" font-size="9.5" fill="#1a9ae2" stroke="#1a9ae2" stroke-width="0.4">BUILD : 8.2.2</text><text transform="translate(99.36 74.00) scale(1.2200 1)" font-size="15.3" fill="#10a0e6" letter-spacing="0.016" stroke="#10a0e6" stroke-width="0.35">Network Configuration and Compliance Management</text><text transform="translate(66.50 112.00) scale(1.0916 1)" font-size="11.6" fill="#10a0e6" stroke="#10a0e6" stroke-width="0.1">Overview</text><text transform="translate(137.83 112.00) scale(1.1600 1)" font-size="11.6" fill="#e4e4e4" stroke="#e4e4e4" stroke-width="0.1">Compliance</text><text transform="translate(226.39 112.00) scale(1.0511 1)" font-size="11.6" fill="#e4e4e4" stroke="#e4e4e4" stroke-width="0.1">Explorer</text><text transform="translate(75.82 156.30) scale(1.0965 1)" font-size="10.8" fill="#ececec" stroke="#ececec" stroke-width="0.35">Device Overview</text><text transform="translate(247.37 261.40) scale(1.1910 1)" font-size="15.9" fill="#dadada">Total</text><path d="M257.2 277.40H263.9V293.90H260.6V280.30H256.9Z" fill="#e2e2e2"/><text transform="translate(265.51 294.10) scale(1.0265 1)" font-size="24.2" fill="#e2e2e2" font-weight="700">0</text><text transform="translate(490.88 251.10) scale(0.9802 1)" font-size="9.5" fill="#e2e2e2" stroke="#e2e2e2" stroke-width="0.15">Switch: 1</text><text transform="translate(490.49 277.10) scale(1.0282 1)" font-size="9.5" fill="#e2e2e2" stroke="#e2e2e2" stroke-width="0.15">Router: 7</text><text transform="translate(490.49 303.10) scale(1.0395 1)" font-size="9.5" fill="#e2e2e2" stroke="#e2e2e2" stroke-width="0.15">Firewall: 2</text><text transform="translate(75.78 412.85) scale(1.1433 1)" font-size="10.8" fill="#ececec" stroke="#ececec" stroke-width="0.35">Backup Summary</text><text transform="translate(247.37 518.53) scale(1.1910 1)" font-size="15.9" fill="#dadada">Total</text><path d="M257.2 534.53H263.9V551.03H260.6V537.43H256.9Z" fill="#e2e2e2"/><text transform="translate(265.51 551.23) scale(1.0265 1)" font-size="24.2" fill="#e2e2e2" font-weight="700">0</text><text transform="translate(490.48 521.43) scale(1.0470 1)" font-size="9.5" fill="#e2e2e2" stroke="#e2e2e2" stroke-width="0.15">Failed: 8</text><text transform="translate(490.85 547.43) scale(1.0589 1)" font-size="9.5" fill="#e2e2e2" stroke="#e2e2e2" stroke-width="0.15">Successful: 2</text><text transform="translate(75.79 669.10) scale(1.1311 1)" font-size="10.8" fill="#ececec" stroke="#ececec" stroke-width="0.35">Baseline-Running Conflict Overview</text><text transform="translate(247.37 774.17) scale(1.1910 1)" font-size="15.9" fill="#dadada">Total</text><text transform="translate(261.89 806.67) scale(1.0442 1)" font-size="22.6" fill="#e2e2e2" font-weight="700">5</text><text transform="translate(490.43 764.27) scale(1.1126 1)" font-size="9.5" fill="#e2e2e2" stroke="#e2e2e2" stroke-width="0.15">Not applicable: 3</text><text transform="translate(490.78 790.27) scale(1.0871 1)" font-size="9.5" fill="#e2e2e2" stroke="#e2e2e2" stroke-width="0.15">Conflict: 2</text><text transform="translate(490.32 816.27) scale(1.1140 1)" font-size="9.5" fill="#e2e2e2" stroke="#e2e2e2" stroke-width="0.15">In-sync: 0</text><text transform="translate(76.25 926.10) scale(1.1373 1)" font-size="10.8" fill="#ececec" stroke="#ececec" stroke-width="0.35">Startup-Running Conflict Overview</text><text transform="translate(247.37 1030.90) scale(1.1910 1)" font-size="15.9" fill="#dadada">Total</text><text transform="translate(261.89 1063.40) scale(1.0442 1)" font-size="22.6" fill="#e2e2e2" font-weight="700">5</text><text transform="translate(490.46 1020.00) scale(1.0774 1)" font-size="9.5" fill="#e2e2e2" stroke="#e2e2e2" stroke-width="0.15">Not applicable: 1</text><text transform="translate(490.38 1046.00) scale(1.0514 1)" font-size="9.5" fill="#e2e2e2" stroke="#e2e2e2" stroke-width="0.15">In-sync: 1</text><text transform="translate(490.78 1072.00) scale(1.0859 1)" font-size="9.5" fill="#e2e2e2" stroke="#e2e2e2" stroke-width="0.15">Conflict: 3</text><text transform="translate(691.80 156.30) scale(1.1218 1)" font-size="10.8" fill="#ececec" stroke="#ececec" stroke-width="0.35">Device Summary</text><text transform="translate(691.52 182.20) scale(0.9296 1)" font-size="8.9" fill="#e4e4e4" font-weight="700">TYPE</text><text transform="translate(994.33 182.20) scale(1.0073 1)" font-size="8.9" fill="#e4e4e4" font-weight="700">VENDOR</text><text transform="translate(1297.15 182.20) scale(0.9902 1)" font-size="8.9" fill="#e4e4e4" font-weight="700">OS TYPE</text><text transform="translate(1600.60 182.20) scale(0.9979 1)" font-size="8.9" fill="#e4e4e4" font-weight="700">NUMBER OF DEVICES</text><text transform="translate(996.65 211.20) scale(1.0969 1)" font-size="10" fill="#dcdcdc" stroke="#dcdcdc" stroke-width="0.25">Cisco Systems</text><text transform="translate(1604.95 211.20) scale(1.0000 1)" font-size="10" fill="#dcdcdc" stroke="#dcdcdc" stroke-width="0.25">1</text><text transform="translate(996.65 247.20) scale(1.0969 1)" font-size="10" fill="#dcdcdc" stroke="#dcdcdc" stroke-width="0.25">Cisco Systems</text><text transform="translate(1605.33 247.20) scale(1.0000 1)" font-size="10" fill="#dcdcdc" stroke="#dcdcdc" stroke-width="0.25">3</text><text transform="translate(996.30 283.20) scale(1.0970 1)" font-size="10" fill="#dcdcdc" stroke="#dcdcdc" stroke-width="0.25">Fortinet</text><text transform="translate(1604.95 283.20) scale(1.0000 1)" font-size="10" fill="#dcdcdc" stroke="#dcdcdc" stroke-width="0.25">1</text><text transform="translate(996.65 319.20) scale(1.0969 1)" font-size="10" fill="#dcdcdc" stroke="#dcdcdc" stroke-width="0.25">Cisco Systems</text><text transform="translate(1301.04 319.20) scale(1.1162 1)" font-size="10" fill="#dcdcdc" stroke="#dcdcdc" stroke-width="0.25">Cisco</text><text transform="translate(1605.48 319.20) scale(1.0000 1)" font-size="10" fill="#dcdcdc" stroke="#dcdcdc" stroke-width="0.25">4</text><text transform="translate(996.65 355.20) scale(1.0969 1)" font-size="10" fill="#dcdcdc" stroke="#dcdcdc" stroke-width="0.25">Cisco Systems</text><text transform="translate(1301.04 355.20) scale(1.1162 1)" font-size="10" fill="#dcdcdc" stroke="#dcdcdc" stroke-width="0.25">Cisco</text><text transform="translate(1604.95 355.20) scale(1.0000 1)" font-size="10" fill="#dcdcdc" stroke="#dcdcdc" stroke-width="0.25">1</text><text transform="translate(691.80 412.85) scale(1.1215 1)" font-size="10.8" fill="#ececec" stroke="#ececec" stroke-width="0.35">Failed Backup Summary</text><text transform="translate(690.99 438.75) scale(1.0202 1)" font-size="8.9" fill="#e4e4e4" font-weight="700">HOST NAME</text><text transform="translate(933.27 438.75) scale(1.0536 1)" font-size="8.9" fill="#e4e4e4" font-weight="700">IP</text><text transform="translate(1176.22 438.75) scale(0.9296 1)" font-size="8.9" fill="#e4e4e4" font-weight="700">TYPE</text><text transform="translate(1418.83 438.75) scale(1.0073 1)" font-size="8.9" fill="#e4e4e4" font-weight="700">VENDOR</text><text transform="translate(1661.60 438.75) scale(0.9989 1)" font-size="8.9" fill="#e4e4e4" font-weight="700">LAST BACKUP TIME</text><text transform="translate(692.00 467.75) scale(1.1805 1)" font-size="10" fill="#dcdcdc" stroke="#dcdcdc" stroke-width="0.25">cisco_core.motadata.local</text><text transform="translate(934.13 467.75) scale(0.9000 1)" font-size="10" fill="#dcdcdc" letter-spacing="-0.027" stroke="#dcdcdc" stroke-width="0.25">172.16.8.2</text><text transform="translate(1419.25 467.75) scale(1.0969 1)" font-size="10" fill="#dcdcdc" stroke="#dcdcdc" stroke-width="0.25">Cisco Systems</text><text transform="translate(1661.87 467.75) scale(1.0029 1)" font-size="10" fill="#dcdcdc" stroke="#dcdcdc" stroke-width="0.25">Thu, Aug 21, 2025 11:05:06 AM</text><text transform="translate(691.60 503.75) scale(1.0857 1)" font-size="10" fill="#dcdcdc" stroke="#dcdcdc" stroke-width="0.25">PMG6.test.com</text><text transform="translate(934.08 503.75) scale(0.9661 1)" font-size="10" fill="#dcdcdc" stroke="#dcdcdc" stroke-width="0.25">192.168.245.2</text><text transform="translate(1419.25 503.75) scale(1.0969 1)" font-size="10" fill="#dcdcdc" stroke="#dcdcdc" stroke-width="0.25">Cisco Systems</text><text transform="translate(1661.88 503.75) scale(0.9957 1)" font-size="10" fill="#dcdcdc" stroke="#dcdcdc" stroke-width="0.25">Thu, Aug 21, 2025 11:05:03 AM</text><text transform="translate(691.63 539.75) scale(1.0579 1)" font-size="10" fill="#dcdcdc" stroke="#dcdcdc" stroke-width="0.25">Router_231</text><text transform="translate(934.12 539.75) scale(0.9119 1)" font-size="10" fill="#dcdcdc" stroke="#dcdcdc" stroke-width="0.25">192.168.231.2</text><text transform="translate(1419.25 539.75) scale(1.0969 1)" font-size="10" fill="#dcdcdc" stroke="#dcdcdc" stroke-width="0.25">Cisco Systems</text><text transform="translate(1661.88 539.75) scale(0.9957 1)" font-size="10" fill="#dcdcdc" stroke="#dcdcdc" stroke-width="0.25">Thu, Aug 21, 2025 11:05:03 AM</text><text transform="translate(692.35 575.75) scale(1.1762 1)" font-size="10" fill="#dcdcdc" stroke="#dcdcdc" stroke-width="0.25">fg_firewall.mindarray.com</text><text transform="translate(934.13 575.75) scale(0.9000 1)" font-size="10" fill="#dcdcdc" letter-spacing="-0.504" stroke="#dcdcdc" stroke-width="0.25">172.16.10.1</text><text transform="translate(1418.89 575.75) scale(1.0970 1)" font-size="10" fill="#dcdcdc" stroke="#dcdcdc" stroke-width="0.25">Fortinet</text><text transform="translate(1661.88 575.75) scale(0.9957 1)" font-size="10" fill="#dcdcdc" stroke="#dcdcdc" stroke-width="0.25">Thu, Aug 21, 2025 11:05:03 AM</text><text transform="translate(691.64 611.75) scale(1.0412 1)" font-size="10" fill="#dcdcdc" stroke="#dcdcdc" stroke-width="0.25">PMG1.test.com</text><text transform="translate(934.11 611.75) scale(0.9231 1)" font-size="10" fill="#dcdcdc" stroke="#dcdcdc" stroke-width="0.25">192.168.240.1</text><text transform="translate(1419.25 611.75) scale(1.0969 1)" font-size="10" fill="#dcdcdc" stroke="#dcdcdc" stroke-width="0.25">Cisco Systems</text><text transform="translate(1661.88 611.75) scale(0.9957 1)" font-size="10" fill="#dcdcdc" stroke="#dcdcdc" stroke-width="0.25">Thu, Aug 21, 2025 11:05:03 AM</text><text transform="translate(691.79 669.10) scale(1.1388 1)" font-size="10.8" fill="#ececec" stroke="#ececec" stroke-width="0.35">Baseline-Running Conflict Summary</text><text transform="translate(690.99 695.00) scale(1.0101 1)" font-size="8.9" fill="#e4e4e4" font-weight="700">DEVICE</text><text transform="translate(994.22 695.00) scale(0.9296 1)" font-size="8.9" fill="#e4e4e4" font-weight="700">TYPE</text><text transform="translate(1297.53 695.00) scale(1.0073 1)" font-size="8.9" fill="#e4e4e4" font-weight="700">VENDOR</text><text transform="translate(1600.59 695.00) scale(1.0082 1)" font-size="8.9" fill="#e4e4e4" font-weight="700">LAST BACKUP AT</text><text transform="translate(691.83 724.00) scale(0.9000 1)" font-size="10" fill="#dcdcdc" letter-spacing="-0.287" stroke="#dcdcdc" stroke-width="0.25">172.16.12.3</text><text transform="translate(1301.05 724.00) scale(1.0969 1)" font-size="10" fill="#dcdcdc" stroke="#dcdcdc" stroke-width="0.25">Cisco Systems</text><text transform="translate(1605.14 724.00) scale(1.0410 1)" font-size="10" fill="#dcdcdc" stroke="#dcdcdc" stroke-width="0.25">Fri, Apr 03, 2026 01:00:00 AM</text><text transform="translate(691.83 760.00) scale(0.9000 1)" font-size="10" fill="#dcdcdc" letter-spacing="-0.402" stroke="#dcdcdc" stroke-width="0.25">172.16.14.13</text><text transform="translate(1301.05 760.00) scale(1.0969 1)" font-size="10" fill="#dcdcdc" stroke="#dcdcdc" stroke-width="0.25">Cisco Systems</text><text transform="translate(1605.14 760.00) scale(1.0410 1)" font-size="10" fill="#dcdcdc" stroke="#dcdcdc" stroke-width="0.25">Fri, Apr 03, 2026 01:00:00 AM</text><text transform="translate(692.24 926.10) scale(1.1494 1)" font-size="10.8" fill="#ececec" stroke="#ececec" stroke-width="0.35">Startup-Running Conflict Summary</text><text transform="translate(690.99 952.00) scale(1.0101 1)" font-size="8.9" fill="#e4e4e4" font-weight="700">DEVICE</text><text transform="translate(994.22 952.00) scale(0.9296 1)" font-size="8.9" fill="#e4e4e4" font-weight="700">TYPE</text><text transform="translate(1297.53 952.00) scale(1.0073 1)" font-size="8.9" fill="#e4e4e4" font-weight="700">VENDOR</text><text transform="translate(1600.60 952.00) scale(0.9989 1)" font-size="8.9" fill="#e4e4e4" font-weight="700">LAST BACKUP TIME</text><text transform="translate(691.83 981.00) scale(0.9000 1)" font-size="10" fill="#dcdcdc" letter-spacing="-0.155" stroke="#dcdcdc" stroke-width="0.25">172.16.9.221</text><text transform="translate(1301.05 981.00) scale(1.0969 1)" font-size="10" fill="#dcdcdc" stroke="#dcdcdc" stroke-width="0.25">Cisco Systems</text><text transform="translate(1605.14 981.00) scale(1.0410 1)" font-size="10" fill="#dcdcdc" stroke="#dcdcdc" stroke-width="0.25">Fri, Apr 03, 2026 01:00:00 AM</text><text transform="translate(691.83 1017.00) scale(0.9000 1)" font-size="10" fill="#dcdcdc" letter-spacing="-0.402" stroke="#dcdcdc" stroke-width="0.25">172.16.14.13</text><text transform="translate(1301.05 1017.00) scale(1.0969 1)" font-size="10" fill="#dcdcdc" stroke="#dcdcdc" stroke-width="0.25">Cisco Systems</text><text transform="translate(1605.14 1017.00) scale(1.0410 1)" font-size="10" fill="#dcdcdc" stroke="#dcdcdc" stroke-width="0.25">Fri, Apr 03, 2026 01:00:00 AM</text><text transform="translate(691.83 1053.00) scale(0.9000 1)" font-size="10" fill="#dcdcdc" letter-spacing="-0.221" stroke="#dcdcdc" stroke-width="0.25">172.16.14.6</text><text transform="translate(1301.05 1053.00) scale(1.0969 1)" font-size="10" fill="#dcdcdc" stroke="#dcdcdc" stroke-width="0.25">Cisco Systems</text><text transform="translate(1605.14 1053.00) scale(1.0410 1)" font-size="10" fill="#dcdcdc" stroke="#dcdcdc" stroke-width="0.25">Fri, Apr 03, 2026 01:00:00 AM</text></svg>
</div></body></html>
